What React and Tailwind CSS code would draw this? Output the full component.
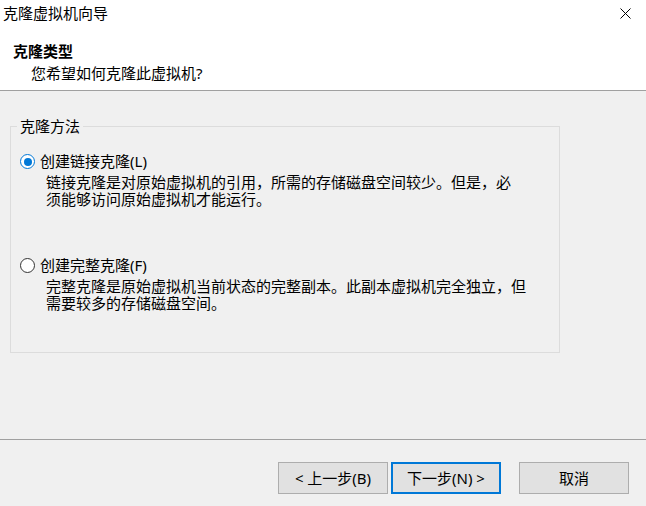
import React, { useState } from 'react';

const font = { fontFamily: '"Segoe UI", "Noto Sans", "Noto Sans CJK SC", sans-serif' };

function Radio({ checked }) {
  return (
    <span
      className={`flex h-[15px] w-[15px] shrink-0 items-center justify-center rounded-full bg-white ${
        checked ? 'border-[1.5px] border-[#0078d7]' : 'border border-[#333333]'
      }`}
    >
      {checked && <span className="h-[8px] w-[8px] rounded-full bg-[#0078d7]" />}
    </span>
  );
}

function Option({ checked, label, hotkey, lines, onClick }) {
  return (
    <div className="cursor-default" onClick={onClick}>
      <div className="flex h-[17px] items-center gap-[5px] pl-[9px]">
        <Radio checked={checked} />
        <span className="leading-[17px]">
          {label}({hotkey})
        </span>
      </div>
      <div className="mt-[4px] pl-[35px] leading-[17px]">
        {lines.map((l, i) => (
          <div key={i}>{l}</div>
        ))}
      </div>
    </div>
  );
}

export default function App() {
  const [mode, setMode] = useState('linked');

  return (
    <div className="flex h-[506px] w-[646px] flex-col bg-[#f0f0f0] text-[15px] text-black" style={font}>
      <div className="h-[91px] shrink-0 border-b border-[#a0a0a0] bg-white">
        <div className="flex h-[26px] items-center justify-between pl-[3px] pr-[15px]">
          <span className="leading-[26px]">克隆虚拟机向导</span>
          <svg width="11" height="11" viewBox="0 0 11 11" className="mt-[1px]">
            <path d="M0.5 0.5L10.5 10.5M10.5 0.5L0.5 10.5" stroke="#000" strokeWidth="1" />
          </svg>
        </div>
        <div className="pl-[13px] pt-[16px] font-bold leading-[18px]">克隆类型</div>
        <div className="pl-[31px] pt-[4px] leading-[18px]">您希望如何克隆此虚拟机?</div>
      </div>

      <div className="h-[349px] shrink-0 border-b border-[#a0a0a0] px-[10px] pt-[27px]">
        <fieldset className="h-[235px] w-[550px] border border-[#dcdcdc]">
          <legend className="ml-[6px] px-[3px] leading-[17px]">克隆方法</legend>
          <div className="pt-[18px]">
            <Option
              checked={mode === 'linked'}
              onClick={() => setMode('linked')}
              label="创建链接克隆"
              hotkey="L"
              lines={['链接克隆是对原始虚拟机的引用，所需的存储磁盘空间较少。但是，必', '须能够访问原始虚拟机才能运行。']}
            />
            <div className="h-[49px]" />
            <Option
              checked={mode === 'full'}
              onClick={() => setMode('full')}
              label="创建完整克隆"
              hotkey="F"
              lines={['完整克隆是原始虚拟机当前状态的完整副本。此副本虚拟机完全独立，但', '需要较多的存储磁盘空间。']}
            />
          </div>
        </fieldset>
      </div>

      <div className="flex items-start pl-[278px] pt-[22px]">
        <button className="h-[32px] w-[110px] border border-[#adadad] bg-[#e1e1e1] text-[15px]">&lt; 上一步(B)</button>
        <button className="ml-[3px] h-[32px] w-[110px] border-2 border-[#0078d7] bg-[#e1e1e1] text-[15px]">下一步(N) &gt;</button>
        <button className="ml-[18px] h-[32px] w-[110px] border border-[#adadad] bg-[#e1e1e1] text-[15px]">取消</button>
      </div>
    </div>
  );
}
